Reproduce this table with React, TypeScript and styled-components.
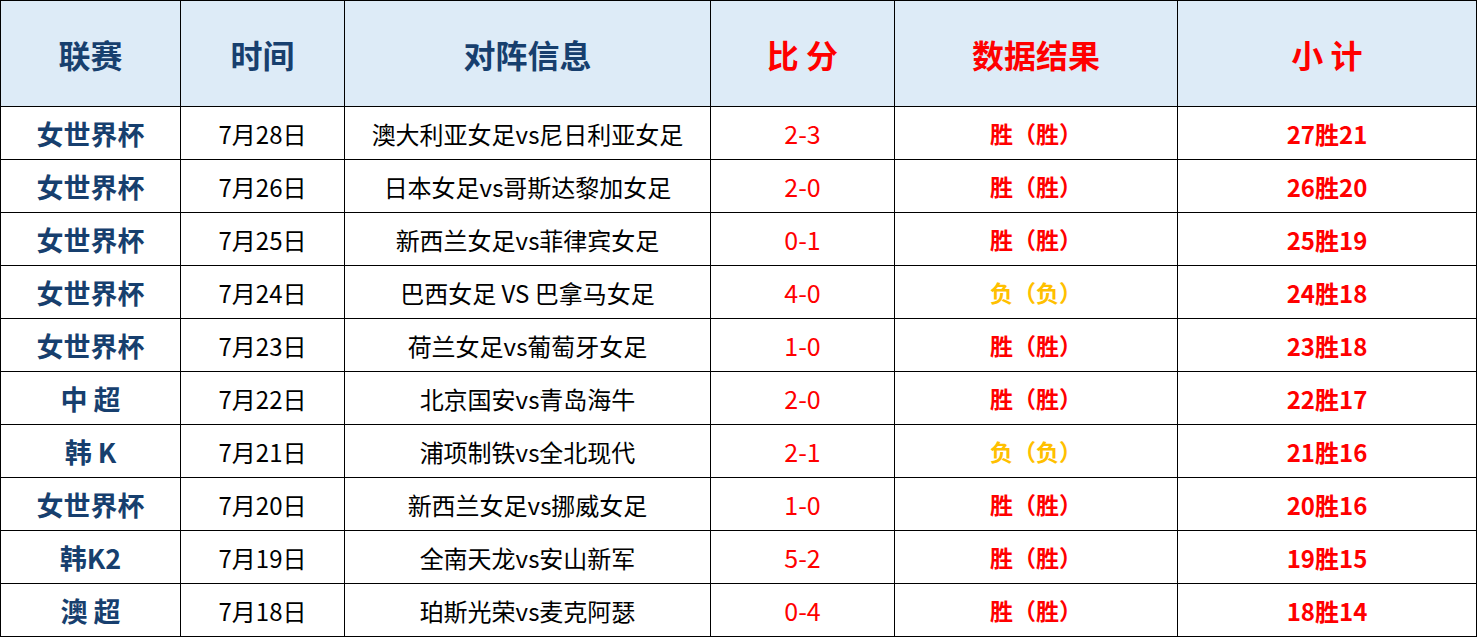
import React from "react";
import styled, { createGlobalStyle } from "styled-components";

const Global = createGlobalStyle`
  html, body { margin: 0; padding: 0; background: #ffffff; }
  body { font-family: "Noto Sans CJK SC", "Noto Sans", sans-serif; }
`;

const COLS = "179px 163px 365px 183px 282px 298px";

const Table = styled.div`
  display: flex;
  flex-direction: column;
  gap: 1px;
  width: 1477px;
  padding: 1px 0;
  background: #000;
  box-sizing: border-box;
`;

const Row = styled.div<{ $head?: boolean }>`
  display: grid;
  grid-template-columns: ${COLS};
  gap: 1px;
  padding: 0 1px;
  height: ${(p) => (p.$head ? 105 : 52)}px;
`;

const Cell = styled.div<{ $head?: boolean }>`
  display: flex;
  align-items: center;
  justify-content: center;
  background: ${(p) => (p.$head ? "#DDEBF7" : "#ffffff")};
  white-space: pre;
`;

const HeadText = styled.span<{ $red?: boolean }>`
  font-size: 32px;
  font-weight: 700;
  color: ${(p) => (p.$red ? "#FF0000" : "#173F6E")};
`;

const League = styled.span`
  font-size: 27px;
  font-weight: 700;
  color: #173F6E;
`;

const DateText = styled.span`
  font-size: 24px;
  color: #000;
`;

const Match = styled.span`
  font-size: 24px;
  color: #000;
`;

const Score = styled.span`
  font-size: 25px;
  color: #FF0000;
`;

const Result = styled.span<{ $lose?: boolean }>`
  font-size: 23px;
  font-weight: 700;
  color: ${(p) => (p.$lose ? "#FFC000" : "#FF0000")};
`;

const Total = styled.span`
  font-size: 24px;
  font-weight: 700;
  color: #FF0000;
`;

const rows = [
  ["女世界杯", "7月28日", "澳大利亚女足vs尼日利亚女足", "2-3", "胜", "27胜21"],
  ["女世界杯", "7月26日", "日本女足vs哥斯达黎加女足", "2-0", "胜", "26胜20"],
  ["女世界杯", "7月25日", "新西兰女足vs菲律宾女足", "0-1", "胜", "25胜19"],
  ["女世界杯", "7月24日", "巴西女足 VS 巴拿马女足", "4-0", "负", "24胜18"],
  ["女世界杯", "7月23日", "荷兰女足vs葡萄牙女足", "1-0", "胜", "23胜18"],
  ["中 超", "7月22日", "北京国安vs青岛海牛", "2-0", "胜", "22胜17"],
  ["韩 K", "7月21日", "浦项制铁vs全北现代", "2-1", "负", "21胜16"],
  ["女世界杯", "7月20日", "新西兰女足vs挪威女足", "1-0", "胜", "20胜16"],
  ["韩K2", "7月19日", "全南天龙vs安山新军", "5-2", "胜", "19胜15"],
  ["澳 超", "7月18日", "珀斯光荣vs麦克阿瑟", "0-4", "胜", "18胜14"],
];

export default function App() {
  return (
    <>
      <Global />
      <Table>
        <Row $head>
          <Cell $head><HeadText>联赛</HeadText></Cell>
          <Cell $head><HeadText>时间</HeadText></Cell>
          <Cell $head><HeadText>对阵信息</HeadText></Cell>
          <Cell $head><HeadText $red>比 分</HeadText></Cell>
          <Cell $head><HeadText $red>数据结果</HeadText></Cell>
          <Cell $head><HeadText $red>小 计</HeadText></Cell>
        </Row>
        {rows.map((r, i) => (
          <Row key={i}>
            <Cell><League>{r[0]}</League></Cell>
            <Cell><DateText>{r[1]}</DateText></Cell>
            <Cell><Match>{r[2]}</Match></Cell>
            <Cell><Score>{r[3]}</Score></Cell>
            <Cell>
              <Result $lose={r[4] === "负"}>{`${r[4]}（${r[4]}）`}</Result>
            </Cell>
            <Cell><Total>{r[5]}</Total></Cell>
          </Row>
        ))}
      </Table>
    </>
  );
}
